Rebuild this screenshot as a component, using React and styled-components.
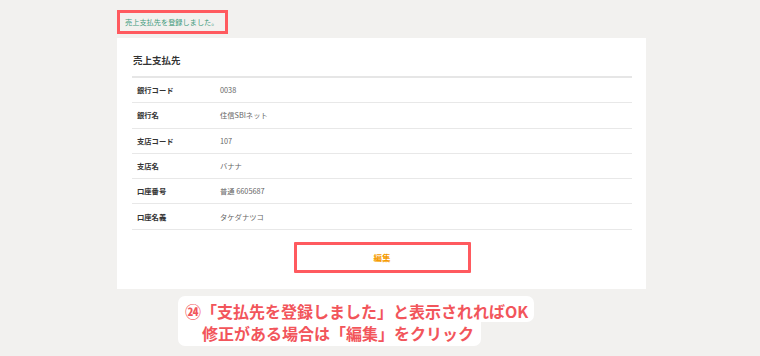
import React from 'react';
import styled, { createGlobalStyle } from 'styled-components';

const GlobalStyle = createGlobalStyle`
  html, body {
    margin: 0;
    padding: 0;
    background: #f2f1ef;
  }
  body {
    font-family: "Noto Sans CJK JP", "Noto Sans", sans-serif;
    color: #333;
  }
`;

const rows = [
  { label: '銀行コード', value: '0038' },
  { label: '銀行名', value: '住信SBIネット' },
  { label: '支店コード', value: '107' },
  { label: '支店名', value: 'バナナ' },
  { label: '口座番号', value: '普通 6605687' },
  { label: '口座名義', value: 'タケダナツコ' },
];

const S = {
  Page: styled.main`
    width: 760px;
    height: 356px;
    box-sizing: border-box;
    padding: 10px 0 0 117px;
    overflow: hidden;
  `,
  Alert: styled.div`
    box-sizing: border-box;
    width: 111px;
    height: 24px;
    border: 3px solid #ff5a5f;
    padding-left: 5px;
    display: flex;
    align-items: center;
    font-size: 7.2px;
    color: #3f9a7c;
    white-space: nowrap;
  `,
  Card: styled.section`
    box-sizing: border-box;
    width: 529px;
    margin-top: 4px;
    background: #fff;
    padding: 14px 14px 16px 15px;
  `,
  Title: styled.h2`
    margin: 0 0 8px 1px;
    font-size: 9.5px;
    line-height: 16px;
    font-weight: 700;
    color: #333;
  `,
  Table: styled.div`
    border-top: 2px solid #e6e6e6;
  `,
  Row: styled.div`
    display: grid;
    grid-template-columns: 88px 1fr;
    align-items: center;
    height: 24.3px;
    border-bottom: 1px solid #e8e8e8;
    font-size: 7.3px;
  `,
  Label: styled.span`
    padding-left: 5px;
    font-weight: 700;
    color: #333;
  `,
  Value: styled.span`
    color: #666;
  `,
  Actions: styled.div`
    display: flex;
    justify-content: center;
    margin-top: 12px;
  `,
  Button: styled.button`
    box-sizing: border-box;
    width: 177px;
    height: 31px;
    background: #fff;
    border: 3px solid #ff5a5f;
    border-radius: 1px;
    font-family: inherit;
    font-size: 8.5px;
    font-weight: 700;
    color: #f59b00;
    cursor: pointer;
  `,
  Note: styled.div`
    display: flex;
    flex-direction: column;
    align-items: flex-start;
    margin: 7px 0 0 61px;
    font-size: 16px;
    font-weight: 700;
    line-height: 22px;
    color: #f2555b;
  `,
  NoteLine: styled.span`
    background: #fff;
    white-space: nowrap;
    padding: ${(p) => (p.$first ? '4px 6px 0 7px' : '0 7px 2px 24px')};
    border-radius: ${(p) => (p.$first ? '7px 7px 7px 0' : '0 0 7px 7px')};
  `,
};

const App = () => {
  return (
    <>
      <GlobalStyle />
      <S.Page>
        <S.Alert>売上支払先を登録しました。</S.Alert>
        <S.Card>
          <S.Title>売上支払先</S.Title>
          <S.Table>
            {rows.map((row) => (
              <S.Row key={row.label}>
                <S.Label>{row.label}</S.Label>
                <S.Value>{row.value}</S.Value>
              </S.Row>
            ))}
          </S.Table>
          <S.Actions>
            <S.Button type="button">編集</S.Button>
          </S.Actions>
        </S.Card>
        <S.Note>
          <S.NoteLine $first>㉔「支払先を登録しました」と表示されればOK</S.NoteLine>
          <S.NoteLine>修正がある場合は「編集」をクリック</S.NoteLine>
        </S.Note>
      </S.Page>
    </>
  );
};

export default App;
